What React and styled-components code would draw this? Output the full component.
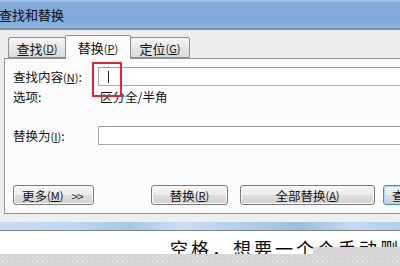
import React from 'react';
import styled, { createGlobalStyle } from 'styled-components';

const GlobalStyle = createGlobalStyle`
  html, body {
    margin: 0;
    padding: 0;
    background: #ffffff;
  }
  body {
    font-family: "Noto Sans CJK SC", "Liberation Sans", sans-serif;
    color: #111;
  }
`;

const Screen = styled.div`
  width: 400px;
  height: 266px;
  overflow: hidden;
  display: flex;
  flex-direction: column;
  position: relative;
`;

const TitleBar = styled.div`
  height: 28px;
  flex: none;
  display: flex;
  align-items: center;
  background: linear-gradient(180deg, #a2c3e8 0%, #83acd9 12%, #7ea8d7 60%, #8ab4e2 100%);
  border-bottom: 2px solid #7d8ea3;
`;

const Title = styled.span`
  font-size: 13px;
  line-height: 14px;
  margin-left: -1px;
  margin-top: 1px;
  color: #0c0c0c;
`;

const Body = styled.div`
  flex: none;
  height: 192px;
  background: #eeeeee;
  padding-left: 4px;
  box-sizing: border-box;
  display: flex;
  flex-direction: column;
  width: 480px;
`;

const TabStrip = styled.div`
  height: 28px;
  display: flex;
  align-items: flex-end;
  padding-left: 4px;
  position: relative;
  z-index: 1;
`;

const Tab = styled.div`
  width: ${(p) => p.$w}px;
  height: ${(p) => (p.$active ? 24 : 21)}px;
  box-sizing: border-box;
  border: 1px solid #8d8f92;
  border-bottom: ${(p) => (p.$active ? 'none' : '1px solid #8d8f92')};
  border-radius: 2px 2px 0 0;
  margin-bottom: ${(p) => (p.$active ? -1 : 0)}px;
  margin-left: ${(p) => (p.$active ? -1 : 0)}px;
  margin-right: ${(p) => (p.$active ? -1 : 0)}px;
  background: ${(p) =>
    p.$active ? '#fcfcfc' : 'linear-gradient(180deg, #f6f6f6 0%, #e6e6e6 55%, #dadada 100%)'};
  display: flex;
  align-items: center;
  justify-content: center;
  font-size: 13px;
  padding-top: ${(p) => (p.$active ? 0 : 1)}px;
  color: #111;
  position: relative;
  z-index: ${(p) => (p.$active ? 2 : 1)};
`;

const Key = styled.span`
  font-size: 11px;
  u {
    text-decoration-thickness: 1px;
  }
`;

const Panel = styled.div`
  height: 156px;
  box-sizing: border-box;
  border: 1px solid #939393;
  background: #fcfcfc;
  padding: 8px 0 0 8px;
  position: relative;
  display: flex;
  flex-direction: column;
`;

const FieldRow = styled.div`
  display: flex;
  align-items: center;
  height: 19px;
  margin-top: ${(p) => p.$top || 0}px;
`;

const Label = styled.span`
  width: 85px;
  flex: none;
  font-size: 12.5px;
  line-height: 14px;
  color: #111;
  white-space: nowrap;
`;

const Input = styled.div`
  width: 380px;
  height: 19px;
  box-sizing: border-box;
  border: 1px solid #a7a9ad;
  border-top-color: #9c9ea2;
  background: #ffffff;
  display: flex;
  align-items: center;
  padding-left: 9px;
`;

const Caret = styled.span`
  width: 1px;
  height: 12px;
  background: #222;
`;

const OptionRow = styled.div`
  display: flex;
  align-items: center;
  height: 14px;
  margin-top: 4px;
`;

const Value = styled.span`
  font-size: 12.5px;
  line-height: 14px;
  margin-left: 2px;
  color: #111;
`;

const Highlight = styled.div`
  position: absolute;
  left: 87px;
  top: 3px;
  width: 30px;
  height: 35px;
  box-sizing: border-box;
  border: 2px solid #e3262d;
`;

const ButtonRow = styled.div`
  display: flex;
  align-items: center;
  margin-top: 40px;
  height: 20px;
`;

const Button = styled.div`
  width: ${(p) => p.$w}px;
  height: 20px;
  flex: none;
  margin-left: ${(p) => p.$gap || 0}px;
  box-sizing: border-box;
  border: 1px solid ${(p) => (p.$focus ? '#3c93d8' : '#7a7a7a')};
  box-shadow: ${(p) => (p.$focus ? '0 0 0 1px #a9d6f5 inset' : 'inset 0 0 0 1px #fbfbfb')};
  border-radius: 3px;
  background: linear-gradient(180deg, #f4f4f4 0%, #ececec 48%, #dddddd 52%, #d2d2d2 100%);
  display: flex;
  align-items: center;
  justify-content: ${(p) => (p.$left ? 'flex-start' : 'center')};
  padding-left: ${(p) => (p.$left ? 8 : 0)}px;
  font-size: 12.5px;
  color: #111;
  white-space: nowrap;
  overflow: hidden;
`;

const Arrows = styled.span`
  margin-left: 8px;
  font-size: 12px;
  letter-spacing: -1px;
  color: #333;
`;

const Gutter = styled.div`
  flex: none;
  height: 8px;
`;

const Strip = styled.div`
  flex: none;
  height: 8px;
  background: linear-gradient(
    90deg,
    #c7dcf2 0%,
    #bcd6f1 20%,
    #a9c6e6 32%,
    #c9def3 45%,
    #b5cfea 60%,
    #9fbddf 75%,
    #c3daf1 88%,
    #b2cde9 100%
  );
  border-bottom: 1px solid #7f848a;
`;

const Doc = styled.div`
  flex: none;
  height: 23px;
  background: #ffffff;
  overflow: hidden;
  position: relative;
  padding: 8px 0 0 170px;
  box-sizing: border-box;
`;

const DocText = styled.div`
  font-size: 18px;
  line-height: 18px;
  letter-spacing: 3px;
  color: #0a0a0a;
  white-space: nowrap;
`;

const dots = `
  background-color: #d5d5d5;
  background-image: radial-gradient(circle, #ececec 0.8px, transparent 1px);
  background-size: 5px 5px;
`;

const DocPatch = styled.div`
  position: absolute;
  left: 313px;
  top: 16px;
  width: 90px;
  height: 10px;
  ${dots}
`;

const Dots = styled.div`
  flex: 1;
  ${dots}
`;

export default function App() {
  return (
    <>
      <GlobalStyle />
      <Screen>
        <TitleBar>
          <Title>查找和替换</Title>
        </TitleBar>
        <Body>
          <TabStrip>
            <Tab $w={58}>
              查找<Key>(<u>D</u>)</Key>
            </Tab>
            <Tab $w={66} $active>
              替换<Key>(<u>P</u>)</Key>
            </Tab>
            <Tab $w={60}>
              定位<Key>(<u>G</u>)</Key>
            </Tab>
          </TabStrip>
          <Panel>
            <FieldRow>
              <Label>
                查找内容<Key>(<u>N</u>)</Key>:
              </Label>
              <Input>
                <Caret />
              </Input>
            </FieldRow>
            <OptionRow>
              <Label>选项:</Label>
              <Value>区分全/半角</Value>
            </OptionRow>
            <FieldRow $top={22}>
              <Label>
                替换为<Key>(<u>I</u>)</Key>:
              </Label>
              <Input />
            </FieldRow>
            <ButtonRow>
              <Button $w={81} $left>
                更多<Key>(<u>M</u>)</Key>
                <Arrows>&gt;&gt;</Arrows>
              </Button>
              <Button $w={77} $gap={57}>
                替换<Key>(<u>R</u>)</Key>
              </Button>
              <Button $w={135} $gap={12}>
                全部替换<Key>(<u>A</u>)</Key>
              </Button>
              <Button $w={90} $gap={8} $focus $left>
                查找下一处<Key>(<u>F</u>)</Key>
              </Button>
            </ButtonRow>
            <Highlight />
          </Panel>
          <Gutter />
        </Body>
        <Strip />
        <Doc>
          <DocText>空格，想要一个个手动删除</DocText>
          <DocPatch />
        </Doc>
        <Dots />
      </Screen>
    </>
  );
}
